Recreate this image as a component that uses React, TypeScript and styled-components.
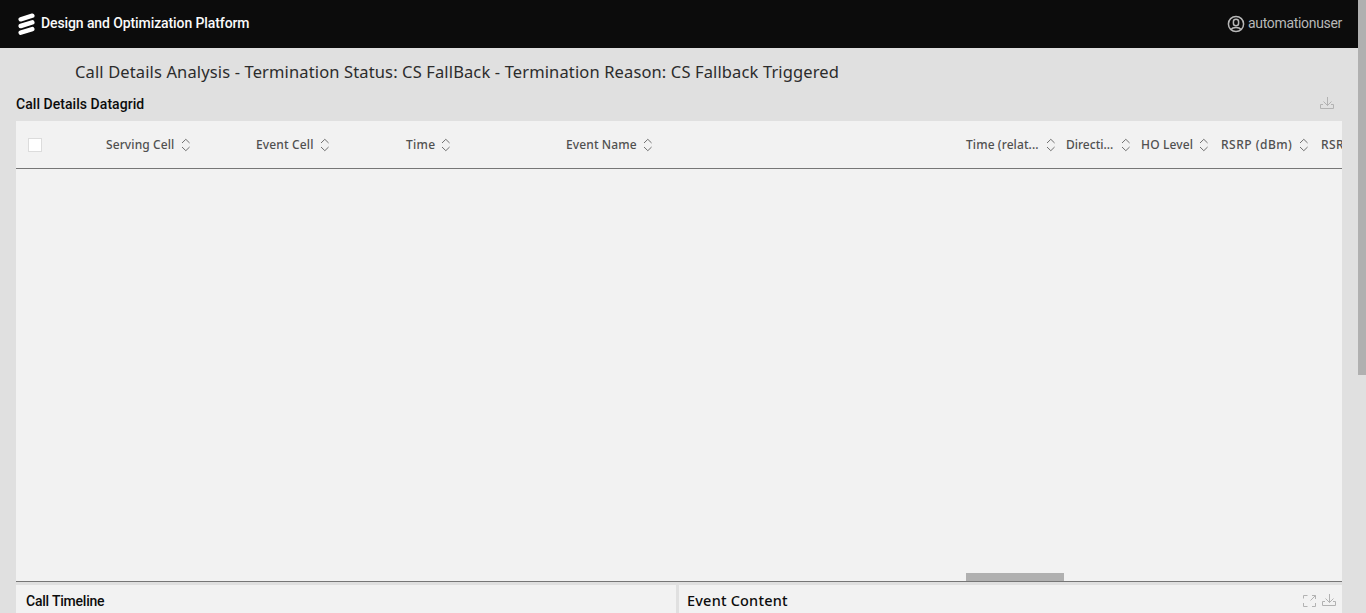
import React from 'react';
import styled, { createGlobalStyle } from 'styled-components';

const GlobalStyle = createGlobalStyle`
  * { box-sizing: border-box; }
  html, body { margin: 0; height: 100%; overflow: hidden; }
  body { background: #e0e0e0; font-family: 'Noto Sans', 'Open Sans', sans-serif; }
`;

const Page = styled.div`
  display: flex;
  height: 613px;
  width: 1366px;
  overflow: hidden;
`;

const Main = styled.div`
  width: 1358px;
  display: flex;
  flex-direction: column;
`;

const Scrollbar = styled.div`
  width: 8px;
  background: #e0e0e0;
`;

const ScrollThumb = styled.div`
  height: 375px;
  background: #b0b0b0;
`;

const Header = styled.header`
  height: 48px;
  flex: none;
  background: #0c0c0c;
  display: flex;
  align-items: center;
  padding: 0 16px 2px 18px;
`;

const Brand = styled.span`
  margin-left: 6px;
  flex: 1;
  color: #fafafa;
  font: 500 14px/20px Roboto, sans-serif;
  letter-spacing: -0.1px;
  white-space: nowrap;
`;

const User = styled.span`
  display: flex;
  align-items: center;
  gap: 3px;
  color: #b8b8b8;
  font: 400 14px/20px Roboto, sans-serif;
  letter-spacing: -0.32px;

  svg { margin-top: 2px; }
`;

const PageTitle = styled.h1`
  margin: 0;
  height: 48px;
  flex: none;
  padding-left: 75px;
  font-size: 16.5px;
  line-height: 48px;
  font-weight: 400;
  letter-spacing: 0.13px;
  color: #2c2c2c;
  white-space: nowrap;
`;

const GridBar = styled.div`
  height: 25px;
  flex: none;
  display: flex;
  justify-content: space-between;
  padding: 0 23px 0 16px;
`;

const SectionTitle = styled.h2<{ $spacing?: number; $wide?: boolean }>`
  margin: 0;
  font-family: ${p => (p.$wide ? "'Noto Sans'" : 'Roboto')}, sans-serif;
  font-size: ${p => (p.$wide ? 14.5 : 14)}px;
  line-height: ${p => (p.$wide ? 14 : 16)}px;
  font-weight: 500;
  color: #0c0c0c;
  white-space: nowrap;
  letter-spacing: ${p => p.$spacing ?? 0}px;
`;

const Grid = styled.section`
  height: 461px;
  flex: none;
  margin: 0 16px;
  background: #f2f2f2;
  border-bottom: 1px solid #767676;
  display: flex;
  flex-direction: column;
  justify-content: space-between;
  overflow: hidden;
`;

const HeadRow = styled.div`
  height: 48px;
  display: flex;
  align-items: center;
  border-bottom: 1px solid #767676;
`;

const CheckCell = styled.div`
  width: 90px;
  flex: none;
  padding-left: 12px;
`;

const Checkbox = styled.div`
  width: 14px;
  height: 14px;
  background: #fff;
  border: 1px solid #dcdcdc;
`;

const HeadCell = styled.div<{ $width: number }>`
  width: ${p => p.$width}px;
  flex: none;
  display: flex;
  align-items: center;
  color: #505050;
  font-size: 12px;
  line-height: 16px;
  font-weight: 500;
  white-space: nowrap;
`;

const HeadLabel = styled.span<{ $width: number; $spacing: number }>`
  width: ${p => p.$width}px;
  letter-spacing: ${p => p.$spacing}px;
`;

const HThumb = styled.div`
  width: 98px;
  height: 8px;
  margin-left: 950px;
  background: #b0b0b0;
`;

const Panels = styled.div`
  display: flex;
  gap: 3px;
  flex: 1;
  margin: 3px 16px 0;
`;

const Panel = styled.section<{ $width: number; $pad: number }>`
  width: ${p => p.$width}px;
  background: #f2f2f2;
  display: flex;
  justify-content: space-between;
  padding: 8px 5px 0 ${p => p.$pad}px;
`;

const Actions = styled.div`
  display: flex;
  gap: 4px;
`;

const Logo = () => (
  <svg width="17" height="24" viewBox="0 0 17 24" fill="none" stroke="#fff" strokeWidth="4.5" strokeLinecap="round">
    <path d="M2.7 8.3 14.3 4.7M2.7 15 14.3 11.4M2.7 21.7 14.3 18.1" />
  </svg>
);

const UserIcon = () => (
  <svg width="18" height="18" viewBox="0 0 18 18" fill="none" stroke="#b8b8b8" strokeWidth="1.5">
    <circle cx="9" cy="9" r="7.6" />
    <rect x="6.4" y="4.3" width="5.2" height="6.4" rx="2.5" />
    <path d="M4 14.5c1-1.5 2.5-2 5-2s4 .5 5 2" />
  </svg>
);

const DownloadIcon = () => (
  <svg width="16" height="16" viewBox="0 0 16 16" fill="none" stroke="#b2b2b2">
    <path d="M4 8.5H1.5v4h13v-4H12M8.5 1v8.5M4.5 5.5l4 4 4-4" />
  </svg>
);

const ExpandIcon = () => (
  <svg width="14" height="16" viewBox="0 0 14 16" fill="none" stroke="#b2b2b2">
    <path d="M4.5 2.5h-4v3M.5 10v3.5h4M9 13.5h3.5V10M9 2.5h3.5V6M12.5 2.5l-5 5" />
  </svg>
);

const SortIcon = () => (
  <svg width="10" height="14" viewBox="0 0 10 14" fill="none" stroke="#707070">
    <path d="M1 5 4.8 1.3 8.6 5M1 9 4.8 12.7 8.6 9" />
  </svg>
);

const columns = [
  { label: 'Serving Cell', width: 150, text: 75, spacing: 0.1 },
  { label: 'Event Cell', width: 150, text: 64, spacing: 0.15 },
  { label: 'Time', width: 160, text: 35, spacing: 0.3 },
  { label: 'Event Name', width: 400, text: 77, spacing: 0.12 },
  { label: 'Time (relat...', width: 100, text: 80, spacing: 0.1 },
  { label: 'Directi...', width: 75, text: 55, spacing: 0 },
  { label: 'HO Level', width: 80, text: 58, spacing: 0.15 },
  { label: 'RSRP (dBm)', width: 100, text: 78, spacing: 0.5 },
  { label: 'RSRQ (dB)', width: 100, text: 78, spacing: 0.4 },
];

export default function App() {
  return (
    <Page>
      <GlobalStyle />
      <Main>
        <Header>
          <Logo />
          <Brand>Design and Optimization Platform</Brand>
          <User><UserIcon />automationuser</User>
        </Header>
        <PageTitle>Call Details Analysis - Termination Status: CS FallBack - Termination Reason: CS Fallback Triggered</PageTitle>
        <GridBar>
          <SectionTitle $spacing={0.05}>Call Details Datagrid</SectionTitle>
          <DownloadIcon />
        </GridBar>
        <Grid>
          <HeadRow>
            <CheckCell><Checkbox /></CheckCell>
            {columns.map(c => (
              <HeadCell key={c.label} $width={c.width}>
                <HeadLabel $width={c.text} $spacing={c.spacing}>{c.label}</HeadLabel>
                <SortIcon />
              </HeadCell>
            ))}
          </HeadRow>
          <HThumb />
        </Grid>
        <Panels>
          <Panel $width={660} $pad={10}>
            <SectionTitle $spacing={-0.22}>Call Timeline</SectionTitle>
          </Panel>
          <Panel $width={663} $pad={8}>
            <SectionTitle $wide $spacing={0.2}>Event Content</SectionTitle>
            <Actions><ExpandIcon /><DownloadIcon /></Actions>
          </Panel>
        </Panels>
      </Main>
      <Scrollbar><ScrollThumb /></Scrollbar>
    </Page>
  );
}
